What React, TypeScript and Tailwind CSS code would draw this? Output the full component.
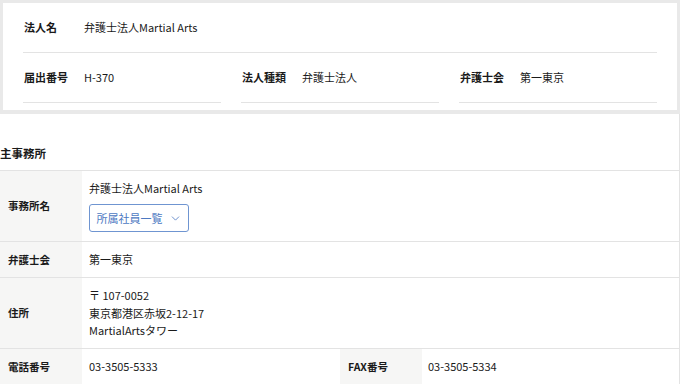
import React from 'react';
import { ChevronDown } from 'lucide-react';

const font = { fontFamily: '"Noto Sans CJK JP", "Noto Sans", sans-serif' };

function TopField({ label, value }: { label: string; value: string }) {
  return (
    <div className="flex items-center w-[198px] h-[50px] border-b border-[#e3e3e3]">
      <span className="w-[61px] pl-px text-[11px] font-bold">{label}</span>
      <span className="text-[11px]">{value}</span>
    </div>
  );
}

function Label({ children }: { children: React.ReactNode }) {
  return (
    <div className="w-[82px] shrink-0 bg-[#f6f6f5] flex items-center pl-2 text-[10.5px] font-bold">
      {children}
    </div>
  );
}

export default function App() {
  return (
    <div className="w-[680px] h-[384px] overflow-hidden bg-white text-[#1a1a1a]" style={font}>
      <div className="bg-[#e9e9e9] px-[3px] pt-[3px] pb-[4px]">
        <div className="bg-white px-5 pb-[7px]">
          <div className="flex items-center h-[50px] border-b border-[#e3e3e3]">
            <span className="w-[61px] pl-px text-[11px] font-bold">法人名</span>
            <span className="text-[11px]">弁護士法人Martial Arts</span>
          </div>
          <div className="flex gap-5">
            <TopField label="届出番号" value="H-370" />
            <TopField label="法人種類" value="弁護士法人" />
            <TopField label="弁護士会" value="第一東京" />
          </div>
        </div>
      </div>

      <div className="border-r border-[#e3e3e3]">
        <h2 className="pt-[30px] pb-2 text-[11.5px] leading-[18px] font-bold">主事務所</h2>

        <div className="border-t border-[#e3e3e3]">
          <div className="flex h-[71px] border-b border-[#e3e3e3]">
            <Label>事務所名</Label>
            <div className="pl-[7px] pt-2 text-[11px]">
              <div className="leading-[18px]">弁護士法人Martial Arts</div>
              <button className="mt-[7px] h-[28px] w-[100px] flex items-center justify-center gap-[6px] border border-[#6f95d1] rounded-[3px] text-[#4d79c2] text-[11px]">
                所属社員一覧
                <ChevronDown size={13} strokeWidth={1.5} />
              </button>
            </div>
          </div>

          <div className="flex h-[36px] border-b border-[#e3e3e3]">
            <Label>弁護士会</Label>
            <div className="pl-[7px] flex items-center text-[11px]">第一東京</div>
          </div>

          <div className="flex h-[71px] border-b border-[#e3e3e3]">
            <Label>住所</Label>
            <div className="pl-[7px] pt-[9px] text-[11px] leading-[17.5px]">
              <div>〒 107-0052</div>
              <div>東京都港区赤坂2-12-17</div>
              <div>MartialArtsタワー</div>
            </div>
          </div>

          <div className="flex h-[36px] border-b border-[#e3e3e3]">
            <div className="flex w-[340px]">
              <Label>電話番号</Label>
              <div className="pl-[7px] flex items-center text-[11px]">03-3505-5333</div>
            </div>
            <div className="flex flex-1">
              <Label>FAX番号</Label>
              <div className="pl-[6px] flex items-center text-[11px]">03-3505-5334</div>
            </div>
          </div>
        </div>
      </div>
    </div>
  );
}
